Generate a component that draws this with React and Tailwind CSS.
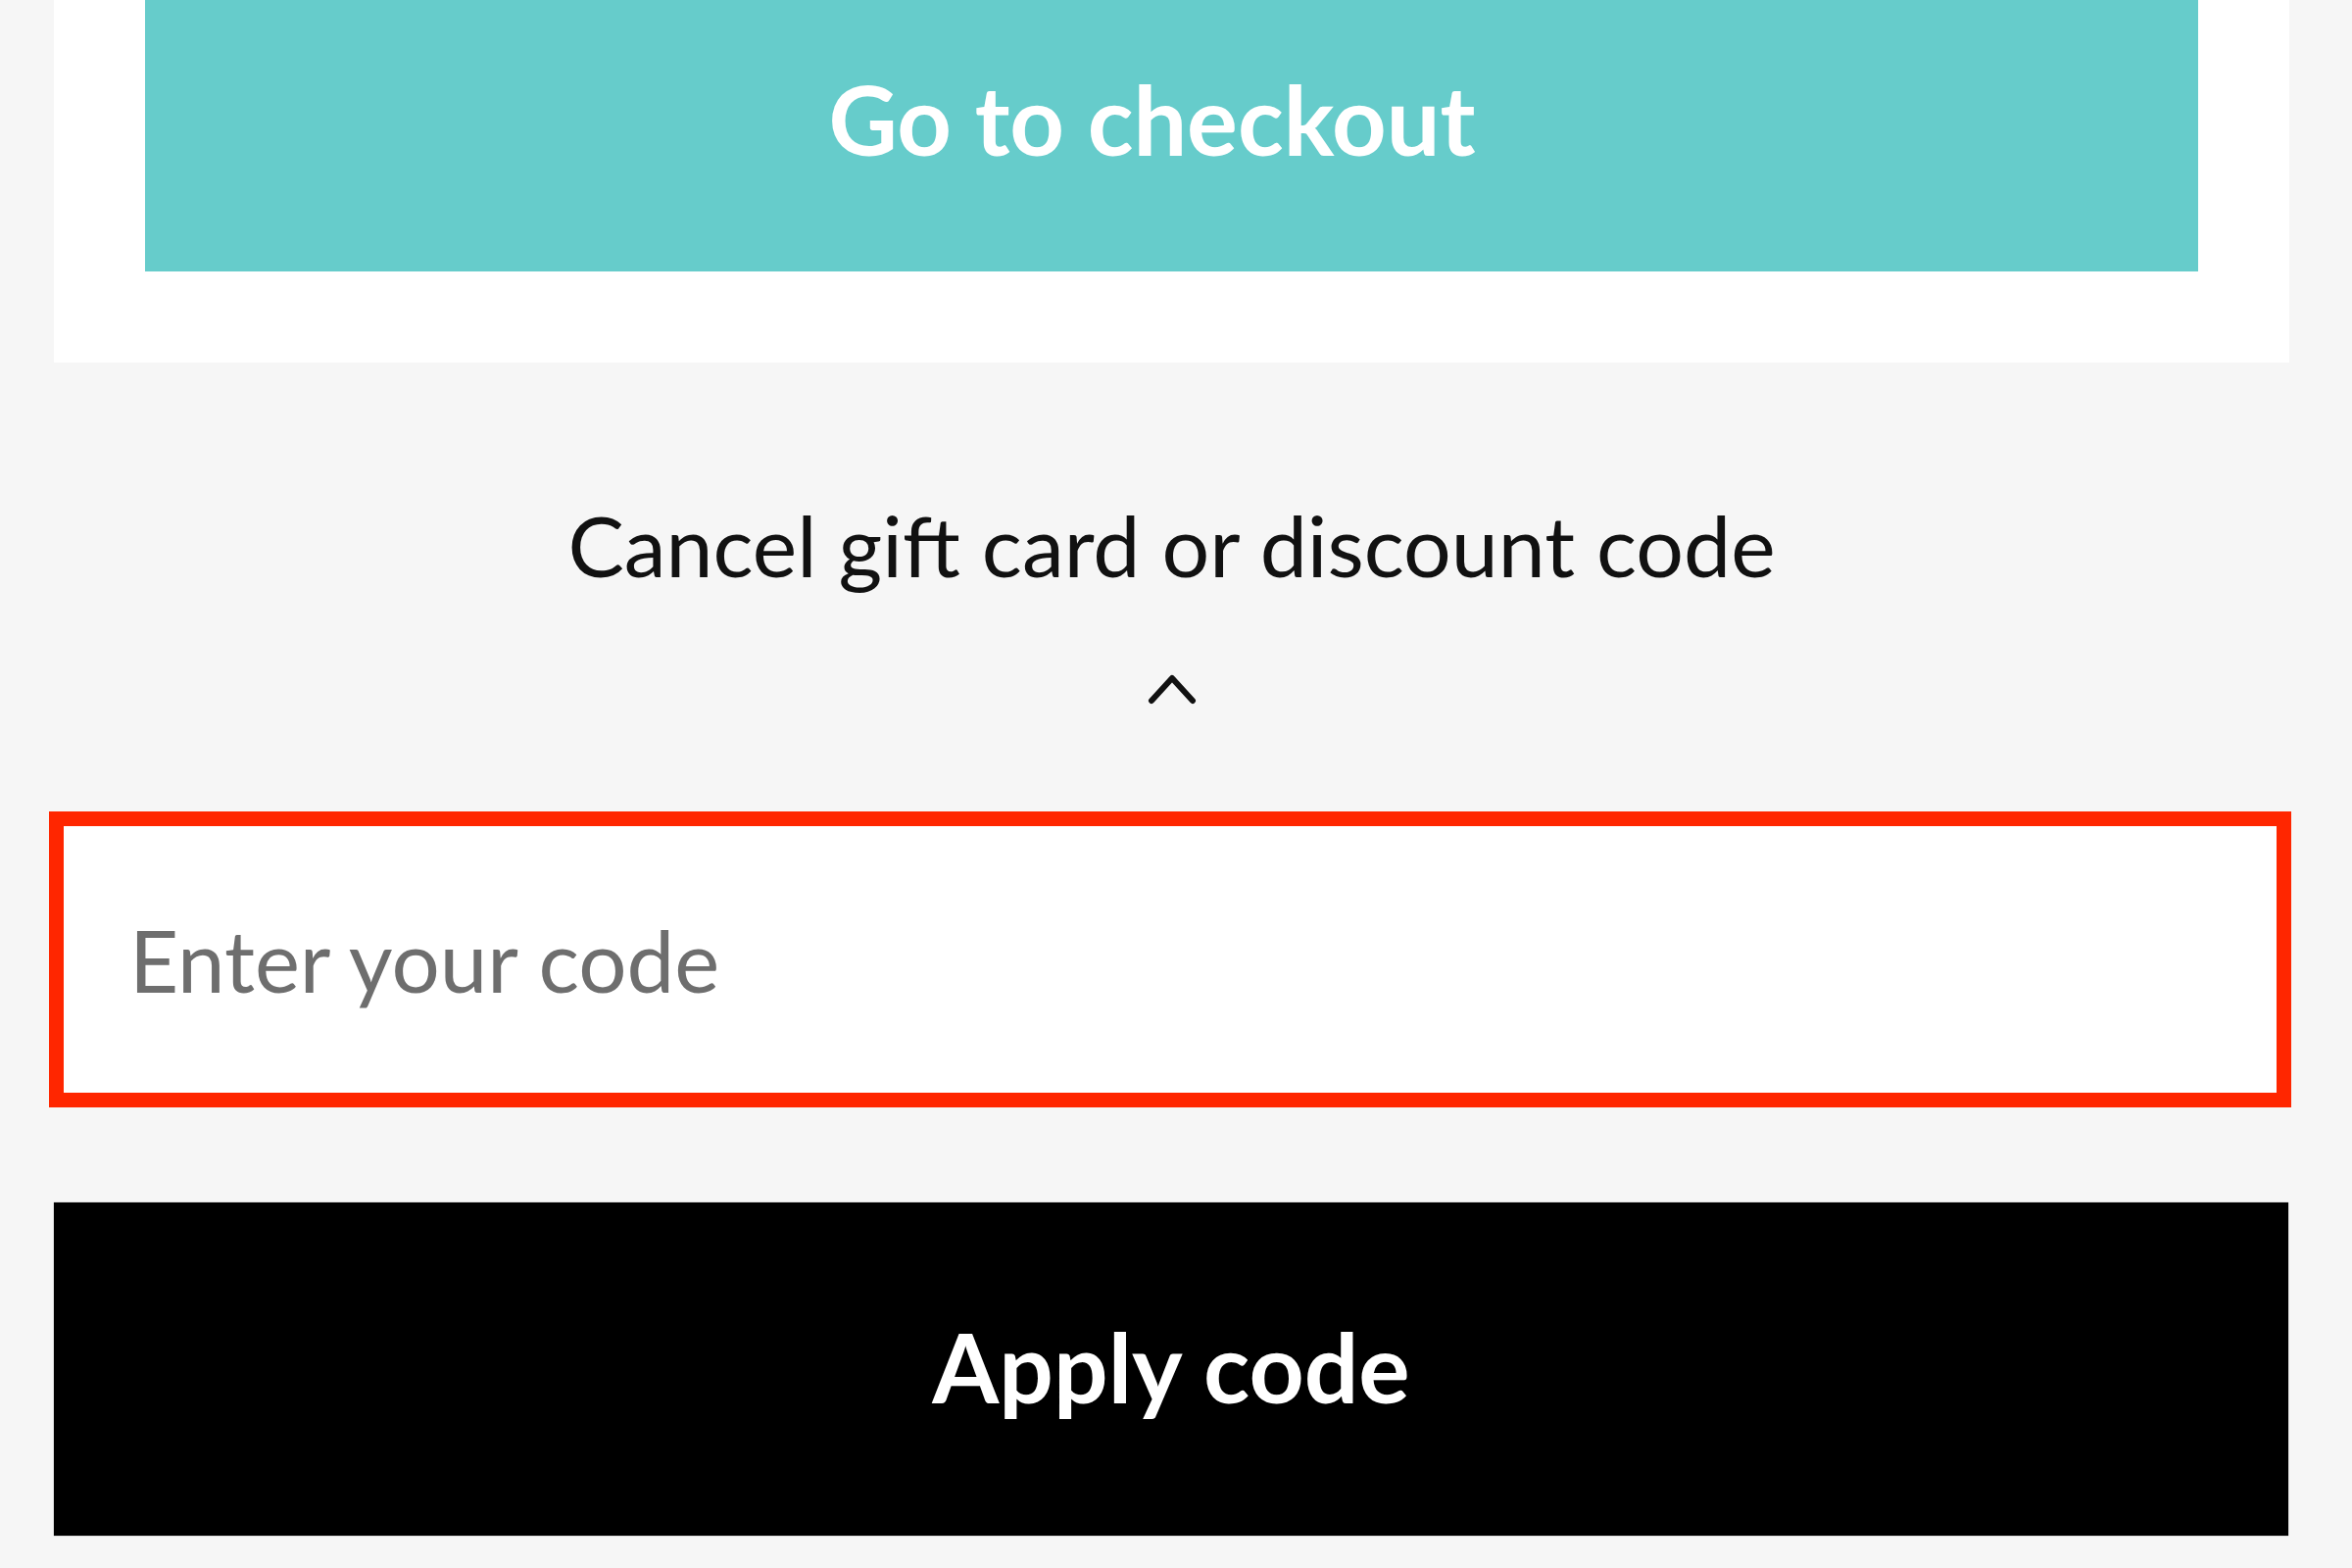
import { useState } from 'react';

function Caret() {
  return (
    <svg width="52" height="32" viewBox="0 0 52 32" fill="none" className="block">
      <polyline points="5,28 26,5 47,28" stroke="#111" strokeWidth="6" strokeLinecap="round" strokeLinejoin="round" />
    </svg>
  );
}

export default function App() {
  const [code, setCode] = useState('');

  return (
    <div className="w-[2400px] h-[1600px] overflow-hidden bg-[#f6f6f6] font-['Lato','Liberation_Sans',sans-serif]">
      <div className="pl-[55px] pr-[64px]">
        <div className="bg-white px-[93px] pb-[93px]">
          <button
            type="button"
            className="-mt-[33px] flex h-[310px] w-full items-center justify-center bg-[#66cccb] pr-[40px] text-[97px] font-bold leading-[1.2] text-white"
          >
            Go to checkout
          </button>
        </div>

        <div className="mt-[134px] flex flex-col items-center">
          <p className="text-[86px] leading-[1.2] text-[#111]">Cancel gift card or discount code</p>
          <div className="mt-[80px]">
            <Caret />
          </div>
        </div>

        <input
          type="text"
          value={code}
          onChange={(e) => setCode(e.target.value)}
          placeholder="Enter your code"
          className="-ml-[5px] mt-[109px] block h-[302px] w-[2288px] border-[15px] border-[#ff2600] bg-white pl-[67px] text-[87px] leading-[1.2] text-[#111] placeholder-[#6e6e6e] outline-none"
        />

        <button
          type="button"
          className="mt-[97px] flex h-[340px] w-[2280px] items-center justify-center bg-black pb-[4px] text-[98px] font-bold leading-[1.2] text-white shadow-[0_0_1px_rgba(0,0,0,0.6)]"
        >
          Apply code
        </button>
      </div>
    </div>
  );
}
